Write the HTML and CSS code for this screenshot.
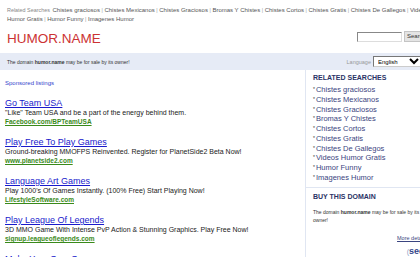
FILE: index.html
```html
<!DOCTYPE html>
<html lang="en">
<head>
    <meta charset="UTF-8">
    <title>humor.name</title>
    <link rel="stylesheet" href="styles.css">
</head>
<body>
    <div class="top-links">
        <span class="top-label">Related Searches</span>
        <a href="#">Chistes graciosos</a><span class="sep">|</span>
        <a href="#">Chistes Mexicanos</a><span class="sep">|</span>
        <a href="#">Chistes Graciosos</a><span class="sep">|</span>
        <a href="#">Bromas Y Chistes</a><span class="sep">|</span>
        <a href="#">Chistes Cortos</a><span class="sep">|</span>
        <a href="#">Chistes Gratis</a><span class="sep">|</span>
        <a href="#">Chistes De Gallegos</a><span class="sep">|</span>
        <a href="#">Videos Humor Gratis</a><span class="sep">|</span>
        <a href="#">Humor Funny</a><span class="sep">|</span>
        <a href="#">Imagenes Humor</a>
    </div>

    <div class="header">
        <div class="logo">HUMOR.NAME</div>
        <form class="search">
            <input type="text" class="search-box">
            <button type="button" class="search-btn">Search</button>
        </form>
    </div>

    <div class="notice">
        <span>The domain <b>humor.name</b> may be for sale by its owner!</span>
        <div class="lang">
            <span class="lang-label">Language</span>
            <select class="lang-select"><option>English</option></select>
        </div>
    </div>

    <div class="page">
        <div class="main">
            <div class="sponsored">Sponsored listings</div>

            <div class="ad">
                <a class="ad-title" href="#">Go Team USA</a>
                <div class="ad-desc">"Like" Team USA and be a part of the energy behind them.</div>
                <a class="ad-url" href="#">Facebook.com/BPTeamUSA</a>
            </div>
            <div class="ad">
                <a class="ad-title" href="#">Play Free To Play Games</a>
                <div class="ad-desc">Ground-breaking MMOFPS Reinvented. Register for PlanetSide2 Beta Now!</div>
                <a class="ad-url" href="#">www.planetside2.com</a>
            </div>
            <div class="ad">
                <a class="ad-title" href="#">Language Art Games</a>
                <div class="ad-desc">Play 1000's Of Games Instantly. (100% Free) Start Playing Now!</div>
                <a class="ad-url" href="#">LifestyleSoftware.com</a>
            </div>
            <div class="ad">
                <a class="ad-title" href="#">Play League Of Legends</a>
                <div class="ad-desc">3D MMO Game With Intense PvP Action &amp; Stunning Graphics. Play Free Now!</div>
                <a class="ad-url" href="#">signup.leagueoflegends.com</a>
            </div>
            <div class="ad">
                <a class="ad-title" href="#">Make Your Own Games</a>
            </div>
        </div>

        <div class="side">
            <div class="side-box related">
                <h3>RELATED SEARCHES</h3>
                <ul>
                    <li><a href="#">Chistes graciosos</a></li>
                    <li><a href="#">Chistes Mexicanos</a></li>
                    <li><a href="#">Chistes Graciosos</a></li>
                    <li><a href="#">Bromas Y Chistes</a></li>
                    <li><a href="#">Chistes Cortos</a></li>
                    <li><a href="#">Chistes Gratis</a></li>
                    <li><a href="#">Chistes De Gallegos</a></li>
                    <li><a href="#">Videos Humor Gratis</a></li>
                    <li><a href="#">Humor Funny</a></li>
                    <li><a href="#">Imagenes Humor</a></li>
                </ul>
            </div>
            <div class="side-box buy">
                <h3>BUY THIS DOMAIN</h3>
                <p>The domain <b>humor.name</b> may be for sale by its owner!</p>
                <a class="more" href="#">More details</a>
                <div class="sedo"><span class="swoosh">(</span><span>sedo</span></div>
            </div>
        </div>
    </div>
</body>
</html>
```

FILE: styles.css
```css
html {
    overflow: hidden;
}

html,
body {
    margin: 0;
    padding: 0;
    background: #fff;
    font-family: "Liberation Sans", Arial, sans-serif;
}

body {
    width: 480px;
}

a {
    text-decoration: none;
}

/* top related links */
.top-links {
    width: 430px;
    padding: 6px 0 0 7px;
    font-size: 6px;
    line-height: 9px;
    height: 17px;
    overflow: hidden;
}

.top-links a {
    color: #555;
}

.top-label {
    font-size: 5.4px;
    color: #888;
    margin-right: 1px;
}

.sep {
    color: #999;
    font-size: 5px;
    vertical-align: top;
    margin: 0 0 0 1.5px;
}

/* header */
.header {
    display: flex;
    align-items: center;
    width: 420px;
    box-sizing: border-box;
    height: 30px;
    padding-left: 7px;
}

.logo {
    flex: 1;
    color: #cc3333;
    font-size: 13.5px;
    margin-top: 1px;
}

.search {
    display: flex;
    flex: none;
    align-items: center;
    margin: 0 -20px 3px 0;
}

.search-box {
    width: 43px;
    height: 8px;
    padding: 0;
    border: 1px solid #888;
    border-right-color: #ddd;
    border-bottom-color: #ddd;
    margin: 0 2px 0 0;
}

.search-btn {
    flex: none;
    height: 11px;
    width: 36px;
    padding: 0 0 0 2px;
    font-family: "Liberation Sans", Arial, sans-serif;
    font-size: 6px;
    line-height: 9px;
    text-align: left;
    color: #333;
    background: #e4e4e4;
    border: 1px solid #c4c4c4;
}

/* notice bar */
.notice {
    display: flex;
    justify-content: space-between;
    align-items: center;
    width: 420px;
    box-sizing: border-box;
    height: 17px;
    padding-left: 7px;
    background: #e6ebf6;
    font-size: 5px;
    color: #333;
}

.lang {
    display: flex;
    align-items: center;
}

.lang-label {
    color: #999;
    font-size: 5.5px;
    margin-right: 2px;
}

.lang-select {
    width: 50px;
    height: 11px;
    font-size: 6px;
    padding: 0;
    border: 1px solid #777;
    border-right-color: #ccc;
    border-bottom-color: #ccc;
    background: #fff;
    margin-right: -3px;
}

/* body */
.page {
    display: flex;
    width: 480px;
}

.main {
    flex: none;
    width: 305px;
    box-sizing: border-box;
    padding: 10px 0 0 5px;
}

.sponsored {
    font-size: 6px;
    color: #3344cc;
    margin-bottom: 11px;
}

.ad {
    height: 38px;
}

.ad-title {
    display: block;
    font-size: 9px;
    line-height: 13px;
    color: #1a1acc;
    text-decoration: underline;
    margin-top: 1px;
}

.ad-desc {
    font-size: 7px;
    line-height: 8px;
    color: #222;
    white-space: nowrap;
    margin-top: -1px;
}

.ad-url {
    display: block;
    font-size: 6.5px;
    font-weight: bold;
    line-height: 9px;
    color: #3a8a1a;
    text-decoration: underline;
}

/* sidebar */
.side {
    flex: none;
    width: 122px;
    border-left: 1px solid #e0e6f2;
}

.side-box {
    padding-left: 7px;
}

.side-box h3 {
    margin: 0;
    font-size: 7px;
    color: #2a3366;
    font-weight: bold;
}

.related {
    padding-top: 4px;
    padding-bottom: 4px;
    border-bottom: 1px solid #e0e6f2;
}

.related ul {
    list-style: none;
    margin: 4px 0 0 0;
    padding: 0;
}

.related li {
    font-size: 7.5px;
    line-height: 9.75px;
    color: #334;
}

.related li::before {
    content: "*";
    font-size: 5px;
    vertical-align: top;
    color: #333;
    margin-right: 1px;
}

.related li a {
    color: #3a4480;
}

.buy {
    padding-top: 5px;
}

.buy p {
    margin: 8px 0 0 0;
    font-size: 5px;
    line-height: 8px;
    color: #333;
    width: 114px;
}

.more {
    display: block;
    text-align: right;
    font-size: 5.5px;
    color: #3a4480;
    text-decoration: underline;
    margin: 11px 0 0 0;
    width: 114px;
}

.sedo {
    text-align: right;
    margin: 5px 0 0 0;
    width: 117px;
    font-size: 9px;
}

.sedo span {
    color: #33468a;
    font-weight: bold;
}

.sedo .swoosh {
    color: #8aa0c8;
    font-weight: normal;
    font-size: 7px;
}
```
